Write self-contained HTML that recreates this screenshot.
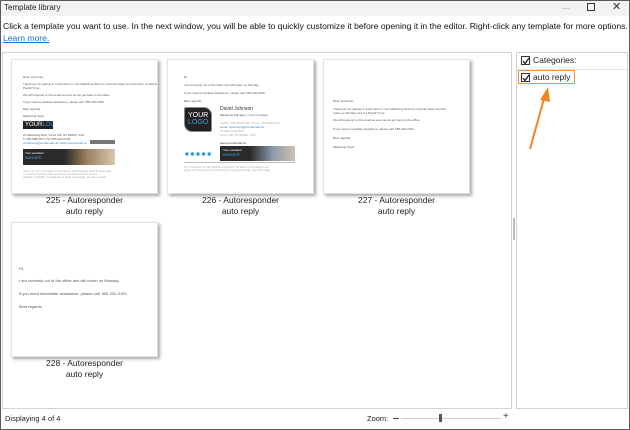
<!DOCTYPE html>
<html><head><meta charset="utf-8"><style>
*{margin:0;padding:0;box-sizing:border-box}
body{width:630px;height:430px;overflow:hidden;background:#fff;font-family:"Liberation Sans",sans-serif;position:relative}
.a{position:absolute}
.win{left:0;top:0;width:630px;height:430px;border:1px solid #5a5a5a;}
.card{position:absolute;width:147px;height:135px;background:#fff;border:1px solid #e2e2e2;box-shadow:2px 2px 3px rgba(0,0,0,.35);overflow:hidden}
.t{position:absolute;font-size:3px;color:#555;white-space:nowrap;line-height:3px}
.lbl{position:absolute;width:147px;text-align:center;font-size:8.5px;color:#222;line-height:11px}
.cb{position:absolute;width:9px;height:9px;border:1px solid #333;background:#fff}
.cb svg{position:absolute;left:0;top:0}
</style></head><body>
<div class="a win"></div>
<div class="a" style="left:1px;top:1px;width:628px;height:15px;background:#f3f3f3"></div>
<div class="a" style="left:4px;top:3px;font-size:8px;color:#222">Template library</div>
<div class="a" style="left:562px;top:8px;width:8px;height:1px;background:#ccc"></div>
<div class="a" style="left:587px;top:3px;width:8px;height:8px;border:1px solid #333"></div>
<div class="a" style="left:612px;top:0px;font-size:11px;color:#333">✕</div>
<div class="a" style="left:3px;top:21px;font-size:8.6px;color:#111;white-space:nowrap">Click a template you want to use. In the next window, you will be able to quickly customize it before opening it in the editor. Right-click any template for more options.</div>
<div class="a" style="left:3px;top:33px;font-size:8.6px;color:#1a6fc4;text-decoration:underline">Learn more.</div>

<div class="a" style="left:2px;top:52px;width:510px;height:357px;border:1px solid #d2d2d2"></div>
<div class="a" style="left:513px;top:218px;width:2px;height:22px;background:#bbb"></div>
<div class="a" style="left:516px;top:52px;width:112px;height:357px;border:1px solid #d2d2d2"></div>
<div class="a" style="left:517px;top:69px;width:110px;height:1px;background:#e2e2e2"></div>

<div class="cb" style="left:521px;top:56px"><svg width="8" height="8"><path d="M1 4 L3 6.5 L7 1" stroke="#222" stroke-width="1.3" fill="none"/></svg></div>
<div class="a" style="left:533px;top:55px;font-size:8.5px;color:#222">Categories:</div>
<div class="a" style="left:518px;top:70px;width:57px;height:14px;border:1.5px solid #f0923a"></div>
<div class="cb" style="left:521px;top:73px"><svg width="8" height="8"><path d="M1 4 L3 6.5 L7 1" stroke="#222" stroke-width="1.3" fill="none"/></svg></div>
<div class="a" style="left:533px;top:72px;font-size:8.5px;color:#222">auto reply</div>
<svg class="a" style="left:525px;top:85px" width="30" height="70"><path d="M5 64 L20 10" stroke="#f5841f" stroke-width="2" fill="none"/><path d="M15 15 L23 2 L25 17 Z" fill="#f5841f"/></svg>

<!-- card 1 -->
<div class="card" style="left:11px;top:59px">
<div class="t" style="left:11px;top:16px">Dear Customer,</div>
<div class="t" style="left:11px;top:23px">Thank you for getting in touch with us. Our Marketing Team is currently away and will return on Monday at 9 am</div>
<div class="t" style="left:11px;top:27px">Pacific Time.</div>
<div class="t" style="left:11px;top:34px">We will respond to this email as soon as we get back to the office.</div>
<div class="t" style="left:11px;top:41px">If you need immediate assistance, please call: 555-202-0109</div>
<div class="t" style="left:11px;top:48px">Best regards,</div>
<div class="t" style="left:11px;top:55px">Marketing Team</div>
<div class="a" style="left:11px;top:61px;width:30px;height:8px;background:#222;color:#fff;font-size:6px;line-height:8px;padding-left:2px;overflow:hidden;white-space:nowrap">YOUR<span style="color:#3aa0e0">LOGO</span></div>
<div class="t" style="left:11px;top:74px">22 Marketing Blvd, Azure Hill, NV 89696, USA</div>
<div class="t" style="left:11px;top:78px">T: 555-888-9077 | M: 555-202-0109</div>
<div class="t" style="left:11px;top:82px;color:#2a7fc8">d.johnson@yourdomain.ai | www.yourdomain.ai</div>
<div class="a" style="left:78px;top:80px;width:25px;height:4px;background:#777"></div>
<div class="a" style="left:11px;top:89px;width:92px;height:16px;background:linear-gradient(90deg,#2a2a2a 45%,#a08060 70%,#d8c8b0)"></div>
<div class="t" style="left:13px;top:92px;color:#fff">Your excellent</div>
<div class="t" style="left:13px;top:96px;color:#3aa0e0;font-size:4px">BANNER</div>
<div class="t" style="left:11px;top:110px;color:#aaa">Some of Your Company's text about data privacy, GDPR and legal</div>
<div class="t" style="left:11px;top:113px;color:#aaa">to ensure that the data you have provided is kept secure.</div>
<div class="t" style="left:11px;top:116px;color:#aaa">related to GDPR compliance or data protection, please contact.</div>
</div>
<div class="lbl" style="left:11px;top:195px">225 - Autoresponder<br>auto reply</div>

<!-- card 2 -->
<div class="card" style="left:167px;top:59px">
<div class="t" style="left:16px;top:16px">Hi,</div>
<div class="t" style="left:16px;top:24px">I am currently out of the office and will return on Monday.</div>
<div class="t" style="left:16px;top:32px">If you need immediate assistance, please call: 555-202-0109</div>
<div class="t" style="left:16px;top:40px">Best regards,</div>
<div class="a" style="left:16px;top:47px;width:28px;height:25px;background:#222;border-radius:2px 8px 2px 8px;border:1px solid #888;color:#fff;font-size:7px;line-height:7px;padding:4px 0 0 3px">YOUR<br><span style="color:#3aa0e0">LOGO</span></div>
<div class="t" style="left:52px;top:47px;font-size:5px;line-height:5px;color:#333">David Johnson</div>
<div class="t" style="left:52px;top:54px">Marketing Manager • Your Company</div>
<div class="t" style="left:52px;top:62px;color:#aaa">mobile: 555-202-0109 | phone: 555-888-9077</div>
<div class="t" style="left:52px;top:66px;color:#2a7fc8">email: d.johnson@yourdomain.ai</div>
<div class="t" style="left:52px;top:70px;color:#aaa">22 Marketing Blvd.</div>
<div class="t" style="left:52px;top:74px;color:#aaa">Azure Hill, NV 89696, USA</div>
<div class="t" style="left:52px;top:82px;color:#333">www.yourdomain.ai</div>
<div class="a" style="left:16px;top:92px;width:28px;height:4px;background:radial-gradient(circle,#2a9ad8 1.5px,transparent 2px) 0 0/5.6px 4px"></div>
<div class="a" style="left:52px;top:86px;width:75px;height:15px;background:linear-gradient(90deg,#2a2a2a 40%,#8a9aaa 70%,#d0c0b0)"></div>
<div class="t" style="left:55px;top:89px;color:#fff">Your excellent</div>
<div class="t" style="left:55px;top:93px;color:#3aa0e0;font-size:4px">BANNER</div>
<div class="a" style="left:16px;top:102px;width:111px;height:1px;background:#bbb"></div>
<div class="t" style="left:16px;top:106px;color:#aaa">Our company is fully GDPR compliant. To learn more about how</div>
<div class="t" style="left:16px;top:109px;color:#aaa">steps for the security and privacy of personal data, visit this page.</div>
</div>
<div class="lbl" style="left:167px;top:195px">226 - Autoresponder<br>auto reply</div>

<!-- card 3 -->
<div class="card" style="left:323px;top:59px">
<div class="t" style="left:9px;top:40px">Dear Customer,</div>
<div class="t" style="left:9px;top:48px">Thank you for getting in touch with us. Our Marketing Team is currently away and will</div>
<div class="t" style="left:9px;top:52px">return on Monday at 9 am Pacific Time.</div>
<div class="t" style="left:9px;top:59px">We will respond to this email as soon as we get back to the office.</div>
<div class="t" style="left:9px;top:68px">If you need immediate assistance, please call: 555-202-0109</div>
<div class="t" style="left:9px;top:77px">Best regards,</div>
<div class="t" style="left:9px;top:86px">Marketing Team</div>
</div>
<div class="lbl" style="left:323px;top:195px">227 - Autoresponder<br>auto reply</div>

<!-- card 4 -->
<div class="card" style="left:11px;top:222px">
<div class="t" style="left:7px;top:44px;font-size:4px">Hi,</div>
<div class="t" style="left:7px;top:56px;font-size:4px">I am currently out of the office and will return on Monday.</div>
<div class="t" style="left:7px;top:69px;font-size:4px">If you need immediate assistance, please call: 555-202-0109</div>
<div class="t" style="left:7px;top:82px;font-size:4px">Best regards,</div>
</div>
<div class="lbl" style="left:11px;top:358px">228 - Autoresponder<br>auto reply</div>

<!-- status -->
<div class="a" style="left:5px;top:414px;font-size:7.5px;color:#222">Displaying 4 of 4</div>
<div class="a" style="left:367px;top:414px;font-size:7.5px;color:#222">Zoom:</div>
<div class="a" style="left:393px;top:418px;width:6px;height:1px;background:#444"></div>
<div class="a" style="left:401px;top:418px;width:100px;height:1px;background:#ccc"></div>
<div class="a" style="left:439px;top:414px;width:3px;height:8px;background:#555"></div>
<div class="a" style="left:503px;top:411px;font-size:10px;color:#444">+</div>
</body></html>
